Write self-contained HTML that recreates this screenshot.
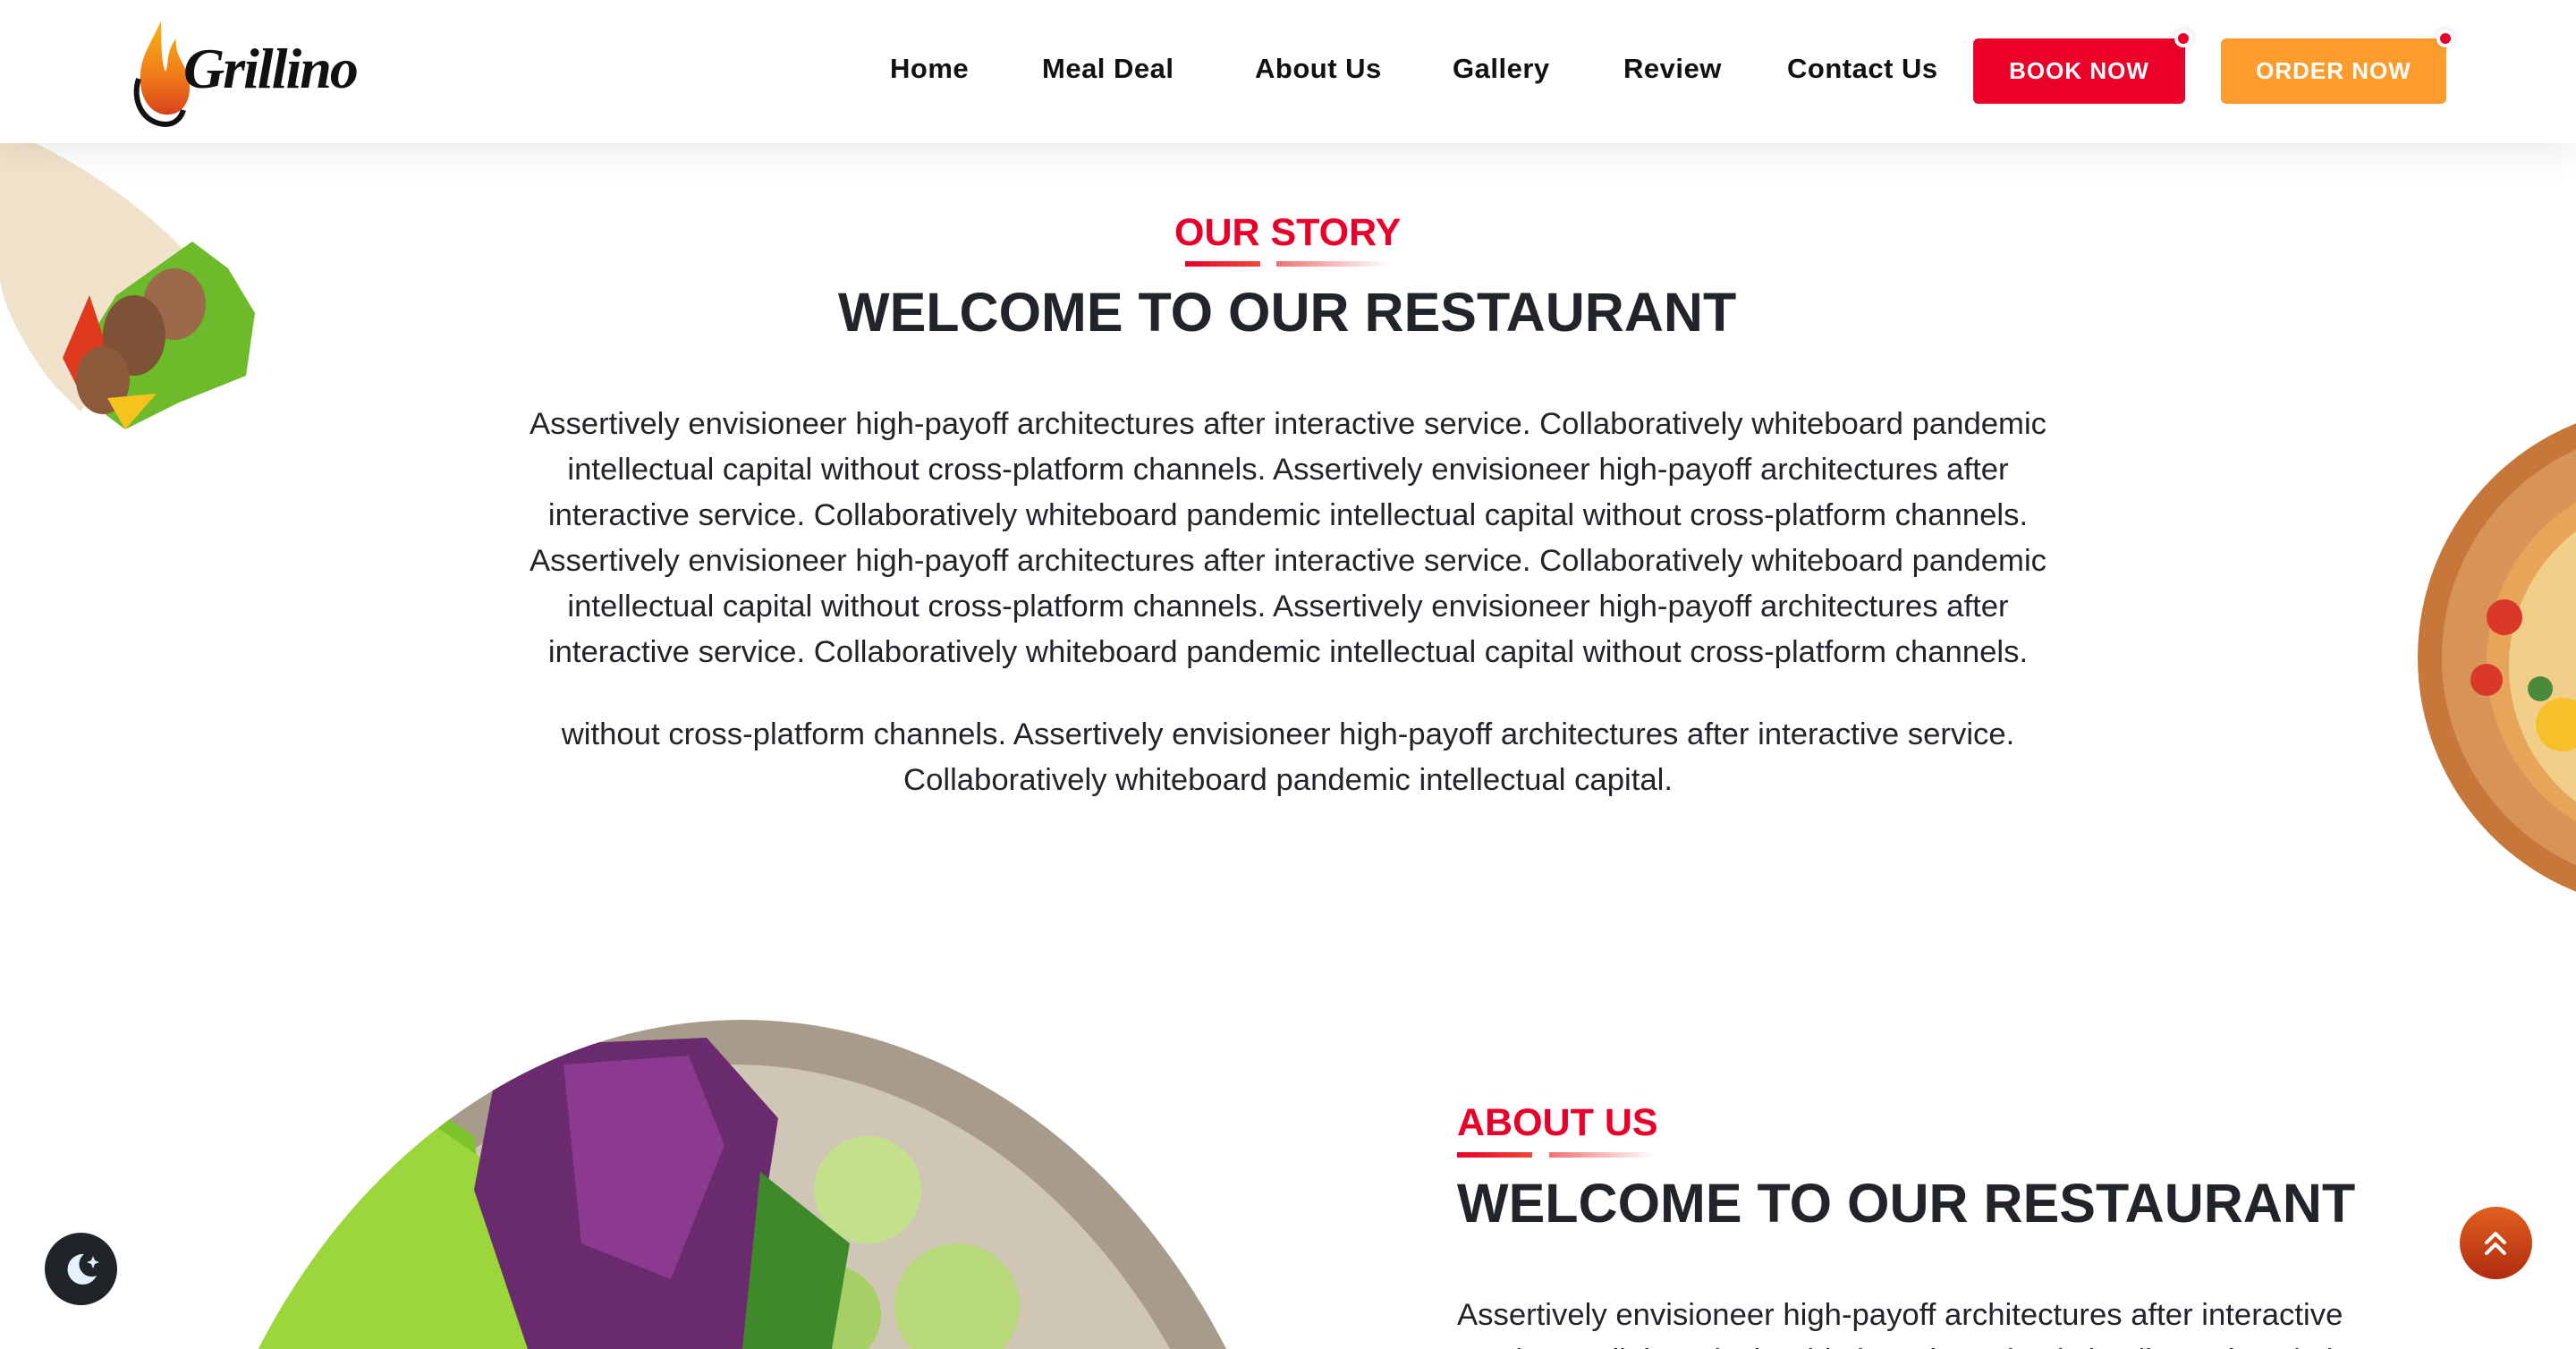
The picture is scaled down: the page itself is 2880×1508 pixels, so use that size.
<!DOCTYPE html>
<html><head><meta charset="utf-8">
<style>
*{margin:0;padding:0;box-sizing:border-box}
html,body{width:2880px;height:1508px;overflow:hidden}
body{background:#fff;font-family:"Liberation Sans",sans-serif;color:#212529;position:relative}
.hdr{position:absolute;left:0;top:0;width:2880px;height:160px;background:#fff;box-shadow:0 8px 40px rgba(0,0,0,.09);z-index:5}
.nav{position:absolute;top:59px;font-size:31px;font-weight:bold;color:#111;white-space:nowrap;letter-spacing:.5px}
.btn{position:absolute;top:43px;height:73px;border-radius:6px;color:#fff;font-size:26px;font-weight:bold;display:flex;align-items:center;justify-content:center;letter-spacing:1px}
.dot{position:absolute;width:20px;height:20px;border-radius:50%;background:#e8002a;border:4px solid #fff;box-shadow:0 0 8px rgba(0,0,0,.15)}
.sub{position:absolute;color:#e8002a;font-weight:bold;font-size:43px;white-space:nowrap}
.bar{position:absolute;height:6px}
.h2{position:absolute;font-weight:bold;font-size:61px;white-space:nowrap;color:#212529}
.p{position:absolute;font-size:34.7px;line-height:51px;text-align:center;white-space:nowrap;color:#212529}
</style></head><body>
<div class="hdr">
  <svg style="position:absolute;left:145px;top:18px" width="90" height="125" viewBox="0 0 90 125">
    <defs><linearGradient id="fl" x1="0" y1="0" x2="0" y2="1"><stop offset="0" stop-color="#f7b315"/><stop offset=".6" stop-color="#f07a1a"/><stop offset="1" stop-color="#d9401a"/></linearGradient></defs>
    <path d="M35 5 C25 30 10 45 12 75 C14 100 30 112 45 110 C62 108 70 90 66 70 C62 52 50 45 52 25 C40 40 44 55 40 62 C34 48 36 25 35 5Z" fill="url(#fl)"/>
    <path d="M10 70 C2 95 15 120 40 121 C52 121 58 112 60 105" fill="none" stroke="#111" stroke-width="6"/>
  </svg>
  <div style="position:absolute;left:205px;top:40px;font-family:'Liberation Serif',serif;font-style:italic;font-weight:bold;font-size:64px;color:#111;letter-spacing:-2px">Grillino</div>
  <div class="nav" style="left:995px">Home</div>
  <div class="nav" style="left:1165px">Meal Deal</div>
  <div class="nav" style="left:1403px">About Us</div>
  <div class="nav" style="left:1624px">Gallery</div>
  <div class="nav" style="left:1815px">Review</div>
  <div class="nav" style="left:1998px">Contact Us</div>
  <div class="btn" style="left:2206px;width:237px;background:#ea0029">BOOK NOW</div>
  <div class="dot" style="left:2431px;top:33px"></div>
  <div class="btn" style="left:2483px;width:252px;background:#fd9c2d">ORDER NOW</div>
  <div class="dot" style="left:2724px;top:33px"></div>
</div>

<!-- wrap image -->
<svg style="position:absolute;left:0;top:160px" width="290" height="325" viewBox="0 0 290 325">
  <path d="M0 0 L40 0 C120 40 180 90 215 130 L90 300 L60 270 C20 220 0 170 0 150Z" fill="#f1e2cb"/>
  <path d="M215 110 L255 140 L285 190 L275 260 L200 290 L140 320 L100 290 L80 250 L130 170Z" fill="#6dbb2a"/>
  <path d="M70 240 L100 170 L120 230 L95 290Z" fill="#e03a1e"/>
  <ellipse cx="195" cy="180" rx="35" ry="40" fill="#9c6a4a"/>
  <ellipse cx="150" cy="215" rx="35" ry="45" fill="#7e5236"/>
  <ellipse cx="115" cy="265" rx="30" ry="38" fill="#8a5a3a"/>
  <path d="M120 285 L175 280 L140 320Z" fill="#f6c21c"/>
</svg>

<!-- pizza -->
<svg style="position:absolute;left:2690px;top:440px" width="190" height="590" viewBox="0 0 190 590">
  <circle cx="295" cy="295" r="282" fill="#c8773a"/>
  <circle cx="295" cy="295" r="255" fill="#d89457"/>
  <circle cx="300" cy="300" r="210" fill="#e7a55a"/>
  <circle cx="305" cy="305" r="190" fill="#f1cf8a"/>
  <circle cx="110" cy="250" r="20" fill="#d9382a"/>
  <circle cx="90" cy="320" r="18" fill="#d9382a"/>
  <circle cx="150" cy="330" r="14" fill="#4b8a3a"/>
  <circle cx="175" cy="370" r="30" fill="#f5c02a"/>
</svg>

<div class="sub" style="left:1313px;top:236px">OUR STORY</div>
<div class="bar" style="left:1325px;top:292px;width:84px;background:linear-gradient(90deg,#e8002a,#f0483c)"></div>
<div class="bar" style="left:1427px;top:292px;width:125px;background:linear-gradient(90deg,#f07070,rgba(240,120,120,0))"></div>
<div class="h2" style="left:937px;top:314px">WELCOME TO OUR RESTAURANT</div>

<div class="p" style="left:0;width:2880px;top:449px">Assertively envisioneer high-payoff architectures after interactive service. Collaboratively whiteboard pandemic<br>intellectual capital without cross-platform channels. Assertively envisioneer high-payoff architectures after<br>interactive service. Collaboratively whiteboard pandemic intellectual capital without cross-platform channels.<br>Assertively envisioneer high-payoff architectures after interactive service. Collaboratively whiteboard pandemic<br>intellectual capital without cross-platform channels. Assertively envisioneer high-payoff architectures after<br>interactive service. Collaboratively whiteboard pandemic intellectual capital without cross-platform channels.</div>
<div class="p" style="left:0;width:2880px;top:796px">without cross-platform channels. Assertively envisioneer high-payoff architectures after interactive service.<br>Collaboratively whiteboard pandemic intellectual capital.</div>

<!-- salad bowl -->
<svg style="position:absolute;left:230px;top:1130px" width="1200" height="378" viewBox="0 0 1200 378">
  <defs><clipPath id="bw"><ellipse cx="600" cy="800" rx="640" ry="790"/></clipPath></defs>
  <ellipse cx="600" cy="800" rx="640" ry="790" fill="#a79c8c"/>
  <g clip-path="url(#bw)">
    <ellipse cx="590" cy="820" rx="600" ry="760" fill="#cfc6b6"/>
    <path d="M-100 120 L180 60 L300 140 L330 378 L-100 378Z" fill="#7cc42a"/>
    <path d="M30 140 L200 90 L360 200 L370 378 L0 378Z" fill="#9bd63a"/>
    <path d="M330 40 L560 30 L640 120 L600 378 L360 378 L300 200Z" fill="#6a2a6e"/>
    <path d="M400 60 L540 50 L580 150 L520 300 L420 260Z" fill="#8b3a8f"/>
    <circle cx="740" cy="200" r="60" fill="#c3e08a"/>
    <circle cx="840" cy="330" r="70" fill="#b8d97a"/>
    <circle cx="700" cy="340" r="55" fill="#a6cf66"/>
    <path d="M620 180 L720 260 L700 378 L600 378Z" fill="#3e8a2a"/>
  </g>
</svg>

<div class="sub" style="left:1629px;top:1231px">ABOUT US</div>
<div class="bar" style="left:1629px;top:1288px;width:84px;background:linear-gradient(90deg,#e8002a,#f0483c)"></div>
<div class="bar" style="left:1732px;top:1288px;width:118px;background:linear-gradient(90deg,#f07070,rgba(240,120,120,0))"></div>
<div class="h2" style="left:1629px;top:1310px">WELCOME TO OUR RESTAURANT</div>
<div class="p" style="left:1629px;top:1445px;text-align:left">Assertively envisioneer high-payoff architectures after interactive<br>service. Collaboratively whiteboard pandemic intellectual capital</div>

<div style="position:absolute;left:50px;top:1378px;width:81px;height:81px;border-radius:50%;background:#1f2429;z-index:6">
  <svg width="81" height="81" viewBox="0 0 81 81"><path d="M44 24 A17 17 0 1 0 58 48 A14 14 0 0 1 44 24Z" fill="#e6f1ff"/><path d="M54 26 l2 5 5 2 -5 2 -2 5 -2 -5 -5 -2 5 -2z" fill="#e6f1ff"/></svg>
</div>
<div style="position:absolute;left:2750px;top:1349px;width:81px;height:81px;border-radius:50%;background:linear-gradient(180deg,#e0601e,#b02c10);z-index:6">
  <svg width="81" height="81" viewBox="0 0 81 81"><path d="M30 40 L40 30 L50 40 M30 52 L40 42 L50 52" fill="none" stroke="#fff" stroke-width="4" stroke-linecap="round" stroke-linejoin="round"/></svg>
</div>
</body></html>
